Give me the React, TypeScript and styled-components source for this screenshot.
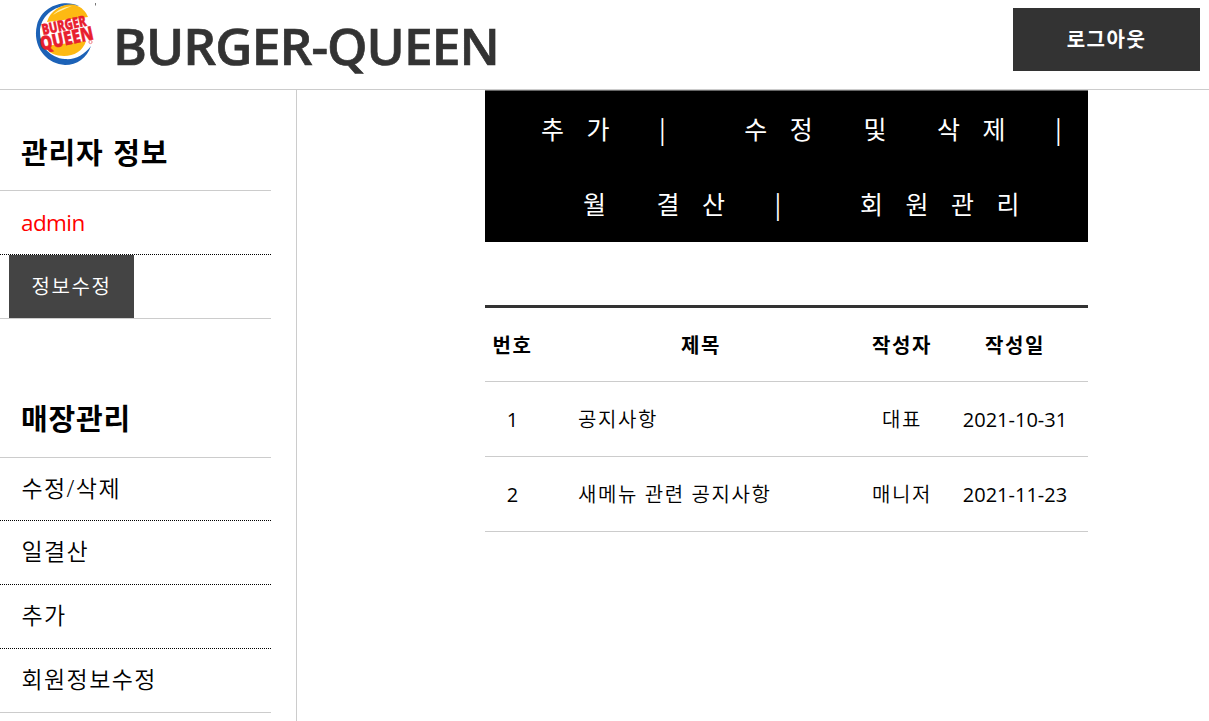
import React from "react";
import styled, { createGlobalStyle } from "styled-components";

const GlobalStyle = createGlobalStyle`
  * { box-sizing: border-box; }
  body {
    margin: 0;
    background: #fff;
    color: #000;
    font-family: "Open Sans", "Noto Sans CJK KR", sans-serif;
    overflow: hidden;
  }
`;

const Page = styled.div`
  display: flex;
  flex-direction: column;
  height: 721px;
`;

const Header = styled.header`
  display: flex;
  align-items: flex-start;
  height: 90px;
  padding: 0 9px 0 31px;
  border-bottom: 1px solid #ccc;
`;

const Logo = styled.svg`
  display: block;
  width: 70px;
  height: 70px;
  flex: none;
  overflow: visible;
`;

const Title = styled.h1`
  margin: 10px 0 0 12px;
  color: #333;
  font-size: 51.5px;
  line-height: 70px;
  font-weight: 600;
  letter-spacing: -0.95px;
  white-space: nowrap;
  -webkit-text-stroke: 0.7px #333;
`;

const Logout = styled.button`
  margin: 8px 0 0 auto;
  width: 187px;
  height: 63px;
  padding: 0 0 2px;
  border: 0;
  background: #333;
  color: #fff;
  font: 700 20px/61px "Noto Sans CJK KR", sans-serif;
  letter-spacing: 1.5px;
`;

const Body = styled.div`
  display: flex;
  flex: 1;
`;

const Sidebar = styled.aside`
  width: 297px;
  padding-right: 25px;
  border-right: 1px solid #ccc;
`;

const SideTitle = styled.h2<{ $height: number; $bottom: number }>`
  display: flex;
  align-items: flex-end;
  height: ${(p) => p.$height}px;
  margin: 0;
  padding: 0 0 ${(p) => p.$bottom}px 21px;
  border-bottom: 1px solid #ccc;
  font-size: 29px;
  line-height: 44px;
  font-weight: 700;
  letter-spacing: 0.8px;
  word-spacing: 1.5px;
`;

const SideItem = styled.div<{ $last?: boolean; $height?: number }>`
  display: flex;
  align-items: center;
  height: ${(p) => p.$height ?? 64}px;
  padding: 0 0 5px 21.5px;
  border-bottom: 1px ${(p) => (p.$last ? "solid #ccc" : "dotted #000")};
  font-size: 23px;
  font-weight: 350;
  letter-spacing: 1.4px;
`;

const UserName = styled(SideItem)`
  padding: 0 0 0 21px;
  color: #f00;
  font-weight: 400;
  font-size: 22.5px;
  letter-spacing: -0.6px;
`;

const ButtonRow = styled.div`
  height: 64px;
  padding-left: 9px;
  border-bottom: 1px solid #ccc;
`;

const EditButton = styled.button`
  display: block;
  width: 125px;
  height: 63px;
  padding: 0 0 2px;
  border: 0;
  background: #444;
  color: #fff;
  font: 350 20px/61px "Noto Sans CJK KR", sans-serif;
  letter-spacing: 1.6px;
`;

const Main = styled.main`
  width: 603px;
  margin-left: 188px;
`;

const Nav = styled.nav`
  height: 152px;
  border-top: 1px solid #666;
  background: #000;
  color: #fff;
`;

const NavLine = styled.div<{ $indent: number }>`
  display: flex;
  height: 75px;
  padding-left: ${(p) => p.$indent}px;
  font: 400 25px/75px "Noto Sans CJK KR", sans-serif;
  letter-spacing: 22.5px;
  white-space: pre;
`;

const NavLink = styled.span<{ $gap?: number }>`
  margin-left: ${(p) => p.$gap ?? 0}px;
`;

const Table = styled.table`
  width: 603px;
  margin-top: 63px;
  border-collapse: separate;
  border-spacing: 0;
  border-top: 3px solid #333;
  table-layout: fixed;
  font-size: 20px;
`;

const Cell = styled.td<{ $left?: boolean; $latin?: boolean; $head?: boolean }>`
  height: ${(p) => (p.$head ? 74 : 75)}px;
  padding: 2px 0 0 ${(p) => (p.$left ? 38 : 0)}px;
  border-bottom: 1px solid #ccc;
  text-align: ${(p) => (p.$left ? "left" : "center")};
  font-weight: ${(p) => (p.$head ? 700 : p.$latin ? 400 : 350)};
  letter-spacing: ${(p) => (p.$latin ? 0 : 1.6)}px;
  line-height: 30px;
  white-space: nowrap;
`;

const notices = [
  { id: 1, title: "공지사항", author: "대표", date: "2021-10-31" },
  { id: 2, title: "새메뉴 관련 공지사항", author: "매니저", date: "2021-11-23" },
];

const BurgerLogo = () => (
  <Logo viewBox="0 0 70 70" aria-label="Burger Queen">
    <path
      d="M48 6C33 -1 11 6 6 25C1 45 14 64 34 65C46 65 56 58 60 46C53 55 44 60 34 59C19 58 9 46 9 32C9 16 25 2 48 6Z"
      fill="#1c62b7"
    />
    <path d="M16 22C20 9 33 3 44 5C51 7 55 12 57 17Z" fill="#fdb913" />
    <path d="M22 15C27 9 34 7 41 6C34 9 28 11 22 15Z" fill="#fff0ad" />
    <path d="M14 46L55 41C52 51 43 56 33 56C25 56 17 53 14 46Z" fill="#fdb913" />
    <g
      fill="#e8202e"
      stroke="#e8202e"
      strokeWidth="0.4"
      fontFamily="Open Sans, sans-serif"
      fontWeight="800"
    >
      <text transform="translate(12 35) rotate(-12)" fontSize="15" textLength="45" lengthAdjust="spacingAndGlyphs">
        BURGER
      </text>
      <text transform="translate(10.5 50.5) rotate(-12)" fontSize="19" textLength="54" lengthAdjust="spacingAndGlyphs">
        QUEEN
      </text>
    </g>
    <circle cx="59.5" cy="42" r="1.6" fill="none" stroke="#ef8088" strokeWidth="1" />
    <path d="M64.5 3v2.5" stroke="#777" strokeWidth="1" />
  </Logo>
);

export default function App() {
  return (
    <>
      <GlobalStyle />
      <Page>
        <Header>
          <BurgerLogo />
          <Title>BURGER-QUEEN</Title>
          <Logout>로그아웃</Logout>
        </Header>
        <Body>
          <Sidebar>
            <SideTitle $height={101} $bottom={15}>관리자 정보</SideTitle>
            <UserName>admin</UserName>
            <ButtonRow>
              <EditButton>정보수정</EditButton>
            </ButtonRow>
            <SideTitle $height={139} $bottom={16}>매장관리</SideTitle>
            <SideItem $height={63}>수정/삭제</SideItem>
            <SideItem>일결산</SideItem>
            <SideItem>추가</SideItem>
            <SideItem $last>회원정보수정</SideItem>
          </Sidebar>
          <Main>
            <Nav>
              <NavLine $indent={56}>
                <NavLink>추가</NavLink>
                <NavLink $gap={27}>|</NavLink>
                <NavLink $gap={56}>수정 및 삭제</NavLink>
                <NavLink $gap={27}>|</NavLink>
              </NavLine>
              <NavLine $indent={98}>
                <NavLink>월 결산</NavLink>
                <NavLink $gap={27}>|</NavLink>
                <NavLink $gap={56}>회원관리</NavLink>
              </NavLine>
            </Nav>
            <Table>
              <colgroup>
                <col width="55" />
                <col width="322" />
                <col width="80" />
                <col width="146" />
              </colgroup>
              <thead>
                <tr>
                  <Cell as="th" $head>번호</Cell>
                  <Cell as="th" $head>제목</Cell>
                  <Cell as="th" $head>작성자</Cell>
                  <Cell as="th" $head>작성일</Cell>
                </tr>
              </thead>
              <tbody>
                {notices.map((n) => (
                  <tr key={n.id}>
                    <Cell $latin>{n.id}</Cell>
                    <Cell $left>{n.title}</Cell>
                    <Cell>{n.author}</Cell>
                    <Cell $latin>{n.date}</Cell>
                  </tr>
                ))}
              </tbody>
            </Table>
          </Main>
        </Body>
      </Page>
    </>
  );
}
